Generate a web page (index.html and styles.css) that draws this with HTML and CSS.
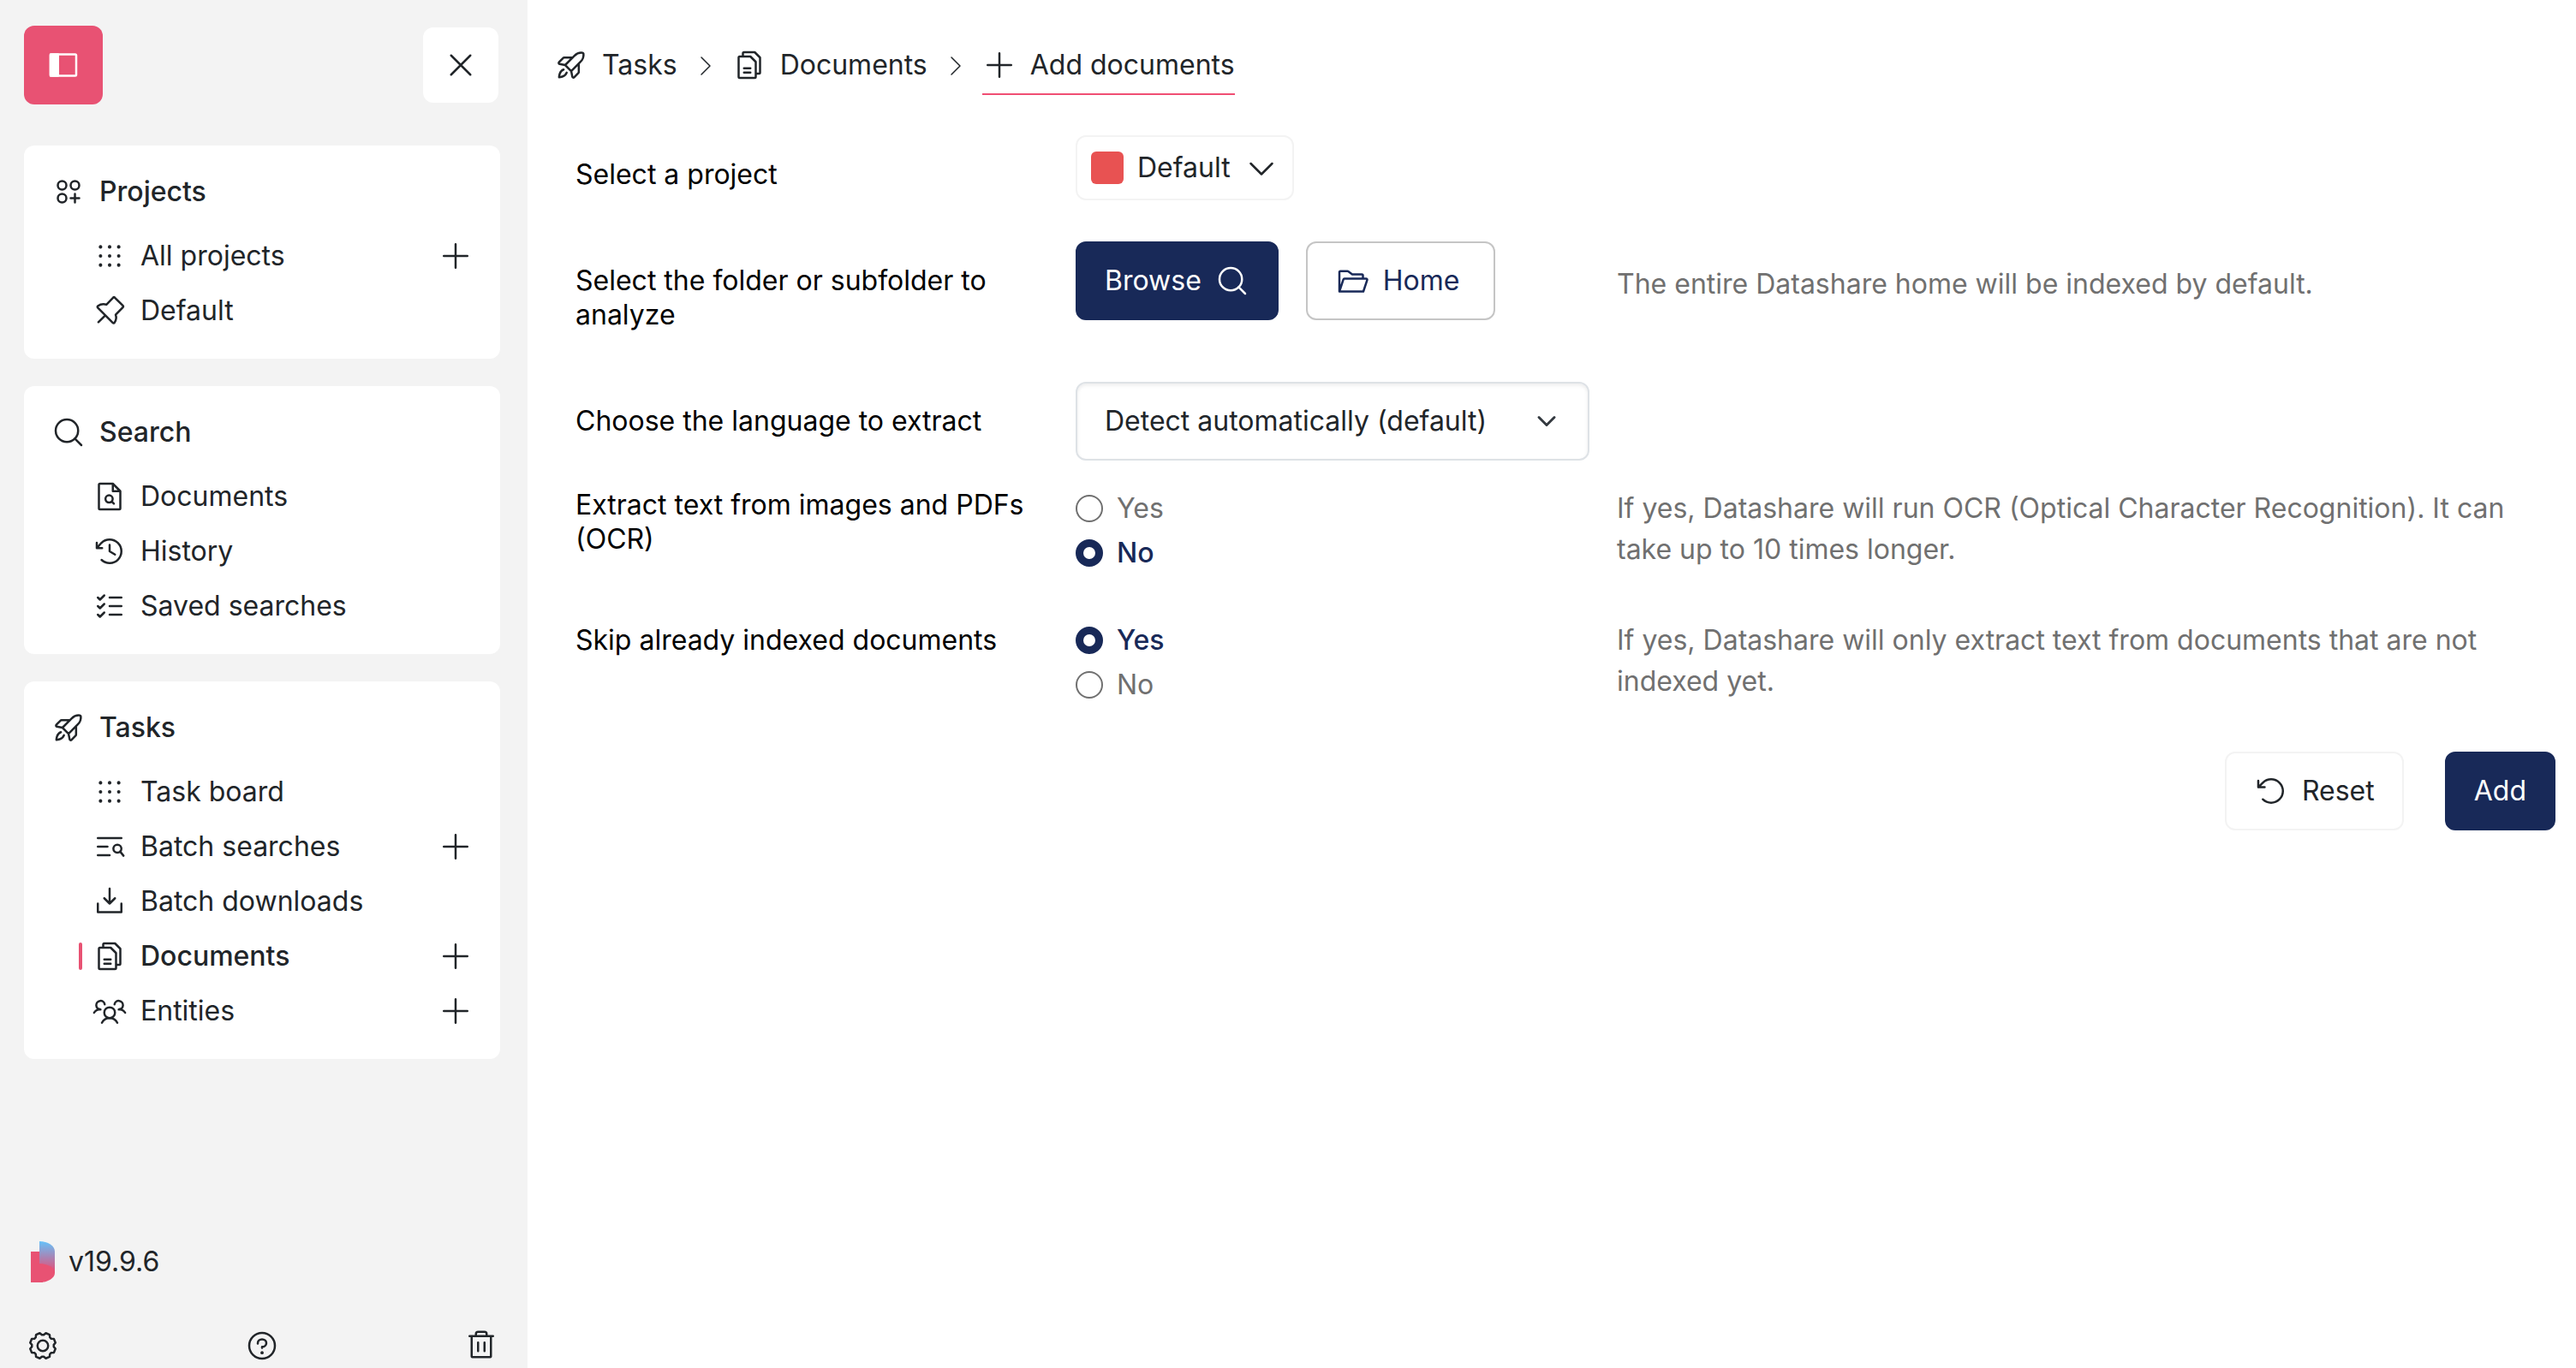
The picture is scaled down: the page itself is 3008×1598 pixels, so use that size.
FILE: index.html
```html
<!DOCTYPE html>
<html lang="en">
<head>
<meta charset="utf-8">
<meta name="viewport" content="width=device-width, initial-scale=1">
<title>Datashare – Add documents</title>
<link rel="stylesheet" href="styles.css">
</head>
<body>
<svg class="sprite" aria-hidden="true">
  <symbol id="i-sidebar" viewBox="0 0 256 256"><rect x="32" y="48" width="192" height="160" rx="8"/><rect x="32" y="48" width="56" height="160" fill="currentColor"/></symbol>
  <symbol id="i-x" viewBox="0 0 256 256"><path d="M200,56L56,200M200,200L56,56"/></symbol>
  <symbol id="i-plus" viewBox="0 0 256 256"><path d="M40,128H216M128,40V216"/></symbol>
  <symbol id="i-circles" viewBox="0 0 256 256"><circle cx="80" cy="80" r="32"/><circle cx="176" cy="80" r="32"/><circle cx="80" cy="176" r="32"/><path d="M144,176H208M176,144V208"/></symbol>
  <symbol id="i-dots" viewBox="0 0 256 256"><g fill="currentColor" stroke="none"><circle cx="60" cy="60" r="13"/><circle cx="128" cy="60" r="13"/><circle cx="196" cy="60" r="13"/><circle cx="60" cy="128" r="13"/><circle cx="128" cy="128" r="13"/><circle cx="196" cy="128" r="13"/><circle cx="60" cy="196" r="13"/><circle cx="128" cy="196" r="13"/><circle cx="196" cy="196" r="13"/></g></symbol>
  <symbol id="i-pin" viewBox="0 0 256 256"><path d="M166,29L228,91a8,8,0,0,1,0,11L173,158C181,178,179,196,164,217a8,8,0,0,1-12,1L39,105a8,8,0,0,1,1-12C60,78,80,76,104,82L155,29a8,8,0,0,1,11,0ZM96,162L44,213"/></symbol>
  <symbol id="i-search" viewBox="0 0 256 256"><circle cx="116" cy="116" r="84"/><path d="M175.4,175.4L224,224"/></symbol>
  <symbol id="i-file-search" viewBox="0 0 256 256"><path d="M200,224H56a8,8,0,0,1-8-8V40a8,8,0,0,1,8-8h96l56,56V216A8,8,0,0,1,200,224ZM152,32V88H208"/><circle cx="124" cy="146" r="27"/><path d="M144,166L160,182"/></symbol>
  <symbol id="i-history" viewBox="0 0 256 256"><path d="M128,80V128L168,152M72,104H32V64M67.6,192A88,88,0,1,0,65.8,65.8L32,104"/></symbol>
  <symbol id="i-checks" viewBox="0 0 256 256"><path d="M128,64H216M128,128H216M128,192H216M40,64L56,80L88,48M40,128L56,144L88,112M40,192L56,208L88,176"/></symbol>
  <symbol id="i-rocket" viewBox="0 0 256 256"><path d="M94.1,184.6c-11.4,33.9-56.6,33.9-56.6,33.9s0-45.2,33.9-56.6M195.9,105.4,128,173.3,82.7,128l67.9-67.9C176.3,34.4,202,34.7,213,36.3a7.8,7.8,0,0,1,6.7,6.7C221.3,54,221.6,79.7,195.9,105.4ZM184.6,116.7v64.6a8,8,0,0,1-2.4,5.6l-32.3,32.4a8,8,0,0,1-13.5-4.1L128,173.3M139.3,71.4H74.7a8,8,0,0,0-5.6,2.4L36.7,106.1a8,8,0,0,0,4.1,13.5L82.7,128"/></symbol>
  <symbol id="i-list-search" viewBox="0 0 256 256"><path d="M40,64H216M40,128H112M40,192H128M206,164L232,196"/><circle cx="186" cy="143" r="30"/></symbol>
  <symbol id="i-download" viewBox="0 0 256 256"><path d="M88,104L128,144L168,104M128,32V144M216,144V208H40V144"/></symbol>
  <symbol id="i-files" viewBox="0 0 256 256"><path d="M168,224H56a8,8,0,0,1-8-8V72a8,8,0,0,1,8-8h80l40,40V216A8,8,0,0,1,168,224ZM80,64V40a8,8,0,0,1,8-8h80l40,40V184a8,8,0,0,1-8,8H176M88,152H136M88,184H136"/></symbol>
  <symbol id="i-users" viewBox="0 0 256 256"><circle cx="128" cy="140" r="40"/><path d="M196,116a59.8,59.8,0,0,1,48,24M12,140a59.8,59.8,0,0,1,48-24M70.4,216a64.1,64.1,0,0,1,115.2,0M60,116A32,32,0,1,1,91.4,78M164.6,78A32,32,0,1,1,196,116"/></symbol>
  <symbol id="i-gear" viewBox="0 0 256 256"><circle cx="128" cy="128" r="40"/><path d="M209.7,135.1L222.3,150.6L210.7,178.7L190.8,180.7L180.7,190.8L178.7,210.7L150.6,222.3L135.1,209.7L120.9,209.7L105.4,222.3L77.3,210.7L75.3,190.8L65.2,180.7L45.3,178.7L33.7,150.6L46.3,135.1L46.3,120.9L33.7,105.4L45.3,77.3L65.2,75.3L75.3,65.2L77.3,45.3L105.4,33.7L120.9,46.3L135.1,46.3L150.6,33.7L178.7,45.3L180.7,65.2L190.8,75.3L210.7,77.3L222.3,105.4L209.7,120.9Z"/></symbol>
  <symbol id="i-question" viewBox="0 0 256 256"><circle cx="128" cy="128" r="96"/><path d="M128,144v-8c17.7,0,32-12.5,32-28s-14.3-28-32-28-32,12.5-32,28v4"/><circle cx="128" cy="180" r="12" fill="currentColor" stroke="none"/></symbol>
  <symbol id="i-trash" viewBox="0 0 256 256"><path d="M40,56H216M104,104V168M152,104V168M200,56V208a4,4,0,0,1-4,4H60a4,4,0,0,1-4-4V56M168,56V40a16,16,0,0,0-16-16H104A16,16,0,0,0,88,40V56"/></symbol>
  <symbol id="i-folder" viewBox="0 0 256 256"><path d="M32,208V64a8,8,0,0,1,8-8H93.3a8,8,0,0,1,4.8,1.6l27.8,20.8a8,8,0,0,0,4.8,1.6H200a8,8,0,0,1,8,8v24M32,208l30-90.5a8,8,0,0,1,7.6-5.5H232a8,8,0,0,1,7.6,10.5L211.1,208Z"/></symbol>
  <symbol id="i-reset" viewBox="0 0 256 256"><path d="M79.8,99.7H31.8V51.7M65.8,190.2a88,88,0,1,0,0-124.4L31.8,99.7"/></symbol>
  <symbol id="i-right" viewBox="0 0 256 256"><path d="M96,48L176,128L96,208"/></symbol>
  <symbol id="i-down" viewBox="0 0 256 256"><path d="M208,96L128,176L48,96"/></symbol>
</svg>

<div class="app">
  <aside class="sidebar">
    <div class="sidebar-head">
      <button class="toggle" type="button" aria-label="Toggle sidebar"><svg class="icon"><use href="#i-sidebar"/></svg></button>
      <button class="close" type="button" aria-label="Close"><svg class="icon"><use href="#i-x"/></svg></button>
    </div>

    <nav class="sections">
      <section class="card">
        <h2 class="card-title"><svg class="icon"><use href="#i-circles"/></svg>Projects</h2>
        <ul class="menu">
          <li class="item"><a class="item-link" href="#"><svg class="icon"><use href="#i-dots"/></svg>All projects</a><button class="add" type="button" aria-label="Add project"><svg class="icon"><use href="#i-plus"/></svg></button></li>
          <li class="item"><a class="item-link" href="#"><svg class="icon"><use href="#i-pin"/></svg>Default</a></li>
        </ul>
      </section>
      <section class="card">
        <h2 class="card-title"><svg class="icon"><use href="#i-search"/></svg>Search</h2>
        <ul class="menu">
          <li class="item"><a class="item-link" href="#"><svg class="icon"><use href="#i-file-search"/></svg>Documents</a></li>
          <li class="item"><a class="item-link" href="#"><svg class="icon"><use href="#i-history"/></svg>History</a></li>
          <li class="item"><a class="item-link" href="#"><svg class="icon"><use href="#i-checks"/></svg>Saved searches</a></li>
        </ul>
      </section>
      <section class="card">
        <h2 class="card-title"><svg class="icon"><use href="#i-rocket"/></svg>Tasks</h2>
        <ul class="menu">
          <li class="item"><a class="item-link" href="#"><svg class="icon"><use href="#i-dots"/></svg>Task board</a></li>
          <li class="item"><a class="item-link" href="#"><svg class="icon"><use href="#i-list-search"/></svg>Batch searches</a><button class="add" type="button" aria-label="Add batch search"><svg class="icon"><use href="#i-plus"/></svg></button></li>
          <li class="item"><a class="item-link" href="#"><svg class="icon"><use href="#i-download"/></svg>Batch downloads</a></li>
          <li class="item item-active"><a class="item-link" href="#" aria-current="page"><svg class="icon"><use href="#i-files"/></svg>Documents</a><button class="add" type="button" aria-label="Add documents"><svg class="icon"><use href="#i-plus"/></svg></button></li>
          <li class="item"><a class="item-link" href="#"><svg class="icon"><use href="#i-users"/></svg>Entities</a><button class="add" type="button" aria-label="Add entities"><svg class="icon"><use href="#i-plus"/></svg></button></li>
        </ul>
      </section>
    </nav>

    <footer class="sidebar-foot">
      <div class="version">
        <svg class="logo" viewBox="0 0 28 48" aria-hidden="true">
          <defs><linearGradient id="lg" x1="0" y1="0" x2="0" y2="1"><stop offset="0" stop-color="#66c2fa"/><stop offset="0.85" stop-color="#d65a85"/><stop offset="1" stop-color="#e85273"/></linearGradient></defs>
          <path fill="#e85273" d="M0,12H14V48H0Z"/>
          <path fill="url(#lg)" d="M10,0C20,0,28,5,28,12V37H10Z"/>
          <path fill="#e85273" d="M10,26C20,26,28,31,28,37C28,43,20,48,10,48Z"/>
        </svg>
        <span>v19.9.6</span>
      </div>
      <div class="tools">
        <a class="tool" href="#" aria-label="Settings"><svg class="icon"><use href="#i-gear"/></svg></a>
        <a class="tool" href="#" aria-label="Help"><svg class="icon"><use href="#i-question"/></svg></a>
        <a class="tool" href="#" aria-label="Delete"><svg class="icon"><use href="#i-trash"/></svg></a>
      </div>
    </footer>
  </aside>

  <main class="main">
    <nav class="crumbs" aria-label="Breadcrumb">
      <a class="crumb" href="#"><svg class="icon"><use href="#i-rocket"/></svg>Tasks</a>
      <svg class="icon icon-small"><use href="#i-right"/></svg>
      <a class="crumb" href="#"><svg class="icon"><use href="#i-files"/></svg>Documents</a>
      <svg class="icon icon-small"><use href="#i-right"/></svg>
      <a class="crumb crumb-active" href="#" aria-current="page"><svg class="icon"><use href="#i-plus"/></svg>Add documents</a>
    </nav>

    <form class="form">
      <div class="field">
        <label class="label" for="project">Select a project</label>
        <div class="control"><button class="project" id="project" type="button"><span class="swatch"></span><span>Default</span><svg class="icon"><use href="#i-down"/></svg></button></div>
      </div>

      <div class="field">
        <label class="label" for="browse">Select the folder or subfolder to analyze</label>
        <div class="control">
          <button class="btn btn-primary" id="browse" type="button">Browse<svg class="icon"><use href="#i-search"/></svg></button>
          <button class="btn btn-outline" type="button"><svg class="icon"><use href="#i-folder"/></svg>Home</button>
        </div>
        <p class="help">The entire Datashare home will be indexed by default.</p>
      </div>

      <div class="field">
        <label class="label" for="language">Choose the language to extract</label>
        <div class="control">
          <div class="select">
            <select id="language"><option>Detect automatically (default)</option></select>
            <svg class="select-arrow" viewBox="0 0 16 16" aria-hidden="true"><path d="M2 5l6 6 6-6"/></svg>
          </div>
        </div>
      </div>

      <div class="field field-choice" role="radiogroup" aria-labelledby="ocr-label">
        <span class="label" id="ocr-label">Extract text from images and PDFs (OCR)</span>
        <div class="choices">
          <label class="choice"><input type="radio" name="ocr"><span>Yes</span></label>
          <label class="choice"><input type="radio" name="ocr" checked><span>No</span></label>
        </div>
        <p class="help">If yes, Datashare will run OCR (Optical Character Recognition). It can take up to 10 times longer.</p>
      </div>

      <div class="field field-choice" role="radiogroup" aria-labelledby="skip-label">
        <span class="label label-single" id="skip-label">Skip already indexed documents</span>
        <div class="choices">
          <label class="choice"><input type="radio" name="skip" checked><span>Yes</span></label>
          <label class="choice"><input type="radio" name="skip"><span>No</span></label>
        </div>
        <p class="help">If yes, Datashare will only extract text from documents that are not indexed yet.</p>
      </div>

      <div class="actions">
        <button class="btn btn-light" type="reset"><svg class="icon"><use href="#i-reset"/></svg>Reset</button>
        <button class="btn btn-primary" type="submit">Add</button>
      </div>
    </form>
  </main>
</div>
</body>
</html>
```
FILE: styles.css
```css
* {
  box-sizing: border-box;
}

body {
  margin: 0;
  background: #fff;
  color: #212529;
  font-family: Inter, "Liberation Sans", sans-serif;
  font-size: 32px;
  line-height: 48px;
}

button,
select,
input {
  margin: 0;
  font: inherit;
  color: inherit;
}

button {
  border: 0;
  padding: 0;
  background: none;
  cursor: pointer;
}

a {
  color: inherit;
  text-decoration: none;
}

h2,
p,
ul {
  margin: 0;
  padding: 0;
}

.sprite {
  display: none;
}

.icon {
  flex: none;
  width: 40px;
  height: 40px;
  fill: none;
  stroke: currentColor;
  stroke-width: 16;
  stroke-linecap: round;
  stroke-linejoin: round;
}

.icon-small {
  width: 32px;
  height: 32px;
  stroke-width: 12;
}

.app {
  display: flex;
  min-height: 100vh;
}

/* Sidebar */

.sidebar {
  display: flex;
  flex: none;
  flex-direction: column;
  width: 616px;
  padding: 30px 32px 6px 28px;
  background: #f3f3f3;
}

.sidebar-head {
  display: flex;
  align-items: center;
  justify-content: space-between;
  margin-bottom: 48px;
  padding-right: 2px;
}

.toggle,
.close {
  display: flex;
  align-items: center;
  justify-content: center;
  border-radius: 12px;
}

.toggle {
  width: 92px;
  height: 92px;
  background: #e85273;
  color: #fff;
}

.close {
  width: 88px;
  height: 88px;
  background: #fff;
}

.sections {
  display: flex;
  flex-direction: column;
  gap: 32px;
}

.card {
  padding: 24px 32px;
  border-radius: 12px;
  background: #fff;
}

.card-title {
  display: flex;
  align-items: center;
  gap: 16px;
  height: 60px;
  margin-bottom: 13px;
  font-size: 32px;
  font-weight: 500;
}

.menu {
  list-style: none;
}

.item {
  display: flex;
  align-items: center;
  justify-content: space-between;
  height: 64px;
  padding-left: 48px;
}

.item-link {
  display: flex;
  align-items: center;
  gap: 16px;
}

.item-active {
  padding-left: 32px;
  font-weight: 500;
}

.item-active .item-link::before {
  width: 4px;
  height: 32px;
  margin-right: -4px;
  border-radius: 2px;
  background: #e85273;
  content: "";
}

.add {
  display: flex;
}

.sidebar-foot {
  margin-top: auto;
  padding-top: 48px;
}

.version {
  display: flex;
  align-items: center;
  gap: 16px;
  margin-bottom: 54px;
  padding-left: 8px;
}

.logo {
  width: 28px;
  height: 48px;
}

.tools {
  display: flex;
  justify-content: space-between;
  padding: 0 2px;
}

.tool {
  display: flex;
}

/* Main column */

.main {
  flex: 1;
  min-width: 0;
  padding: 41px 24px 24px 31px;
}

.crumbs {
  display: flex;
  align-items: flex-start;
  gap: 16px;
}

.crumbs .icon-small {
  margin-top: 20px;
}

.crumb {
  display: flex;
  align-items: center;
  gap: 16px;
  height: 70px;
  border-bottom: 0 solid #f04e73;
}

.crumb-active {
  border-bottom-width: 2px;
  padding-top: 2px;
}

.form {
  display: flex;
  flex-direction: column;
  gap: 32px;
  margin-top: 47px;
  padding-left: 25px;
}

.field {
  display: grid;
  grid-template-columns: 584fr 632fr 1096fr;
  align-items: start;
}

.label {
  padding: 26px 24px 26px 0;
  color: #000;
  line-height: 40px;
}

.control {
  display: flex;
  gap: 32px;
}

.help {
  padding: 26px 24px 0 0;
  color: #707070;
}

.project {
  display: flex;
  align-items: center;
  gap: 16px;
  height: 76px;
  padding: 0 16px;
  border: 2px solid #f3f3f3;
  border-radius: 12px;
}

.swatch {
  width: 38px;
  height: 38px;
  border-radius: 6px;
  background: #e85252;
}

.btn {
  display: flex;
  align-items: center;
  gap: 16px;
  height: 92px;
  padding: 0 32px;
  border: 2px solid transparent;
  border-radius: 12px;
}

.btn-primary {
  border-color: #182958;
  background: #182958;
  color: #fff;
}

.btn-outline {
  padding-right: 40px;
  border-color: #c5c5c5;
  color: #182958;
}

.btn-light {
  border-color: #f3f3f3;
}

.select {
  display: grid;
  align-items: center;
  width: 600px;
}

.select select {
  grid-area: 1 / 1;
  width: 100%;
  height: 92px;
  padding: 0 72px 0 32px;
  border: 2px solid #dee2e6;
  border-radius: 12px;
  background: #fff;
  box-shadow: inset 0 2px 4px rgba(0, 0, 0, 0.08);
  appearance: none;
}

.select-arrow {
  grid-area: 1 / 1;
  justify-self: end;
  width: 24px;
  height: 24px;
  margin-right: 38px;
  fill: none;
  stroke: #343a40;
  stroke-width: 2;
  stroke-linecap: round;
  stroke-linejoin: round;
  pointer-events: none;
}

.field-choice {
  padding-bottom: 22px;
}

.field-choice .label,
.field-choice .help {
  padding-top: 0;
  padding-bottom: 0;
}

.field-choice .label-single {
  line-height: 48px;
}

.choices {
  display: flex;
  flex-direction: column;
  align-items: flex-start;
  gap: 4px;
}

.choice {
  display: flex;
  align-items: center;
  gap: 16px;
  color: #707070;
}

.choice input {
  width: 32px;
  height: 32px;
  border: 2px solid #707070;
  border-radius: 50%;
  background: #fff;
  appearance: none;
}

.choice input:checked {
  border: 9px solid #182958;
}

.choice:has(input:checked) {
  color: #182958;
  font-weight: 500;
}

.actions {
  display: flex;
  justify-content: flex-end;
  gap: 48px;
}
```
